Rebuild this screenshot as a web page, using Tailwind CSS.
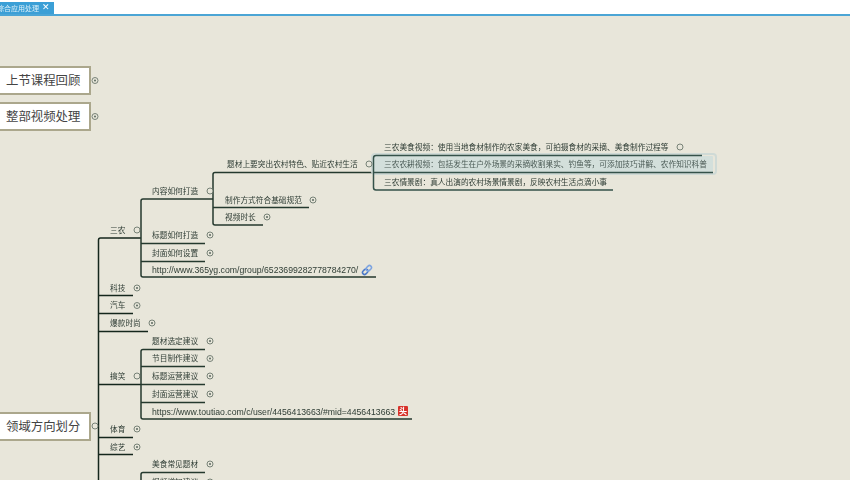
<!DOCTYPE html>
<html lang="zh-CN">
<head>
  <meta charset="UTF-8" />
  <title>综合应用处理</title>
  <script src="https://cdn.jsdelivr.net/npm/@tailwindcss/browser@4"></script>
</head>
<body class="w-[850px] h-[480px] overflow-hidden bg-[#e8e6da] font-['Noto_Sans_CJK_SC',sans-serif]">
  <!-- tab bar -->
  <header class="h-[16px] bg-white border-b-2 border-[#4ba5d5] flex items-end blur-[0.3px]">
    <div class="w-[54px] h-[12px] bg-[#3b9fd6] relative overflow-hidden">
      <span class="absolute left-[-3px] top-0 text-[7px] leading-[13px] whitespace-nowrap text-[#d8eef8]">综合应用处理</span>
      <span class="absolute left-[42px] top-0 text-[9px] leading-[11px] font-['DejaVu_Sans'] text-white">✕</span>
    </div>
  </header>

  <!-- mind map canvas -->
  <main class="absolute inset-0 top-[16px] blur-[0.45px]">
    <svg class="absolute left-0 top-[-16px]" width="850" height="480" fill="none" stroke="#24392e" stroke-width="1.500">
      <defs>
        <g id="plus">
          <circle r="3" stroke="#5c6a60" stroke-width="0.8" fill="#e8e6da" />
          <circle r="1" fill="#5c6a60" stroke="none" />
        </g>
        <g id="open">
          <circle r="3" stroke="#5c6a60" stroke-width="0.8" fill="#e8e6da" />
        </g>
      </defs>

      <!-- trunk -->
      <path stroke="#14261c" d="M98.500 480V240q0-2 2-2H141M98 295.500H133M98 313.500H133M98 331.500H148M98 384.500H141M98 437.500H133M98 454.500H133" />

      <!-- 三农 -->
      <path d="M213 199H143q-2 0-2 2V275q0 2 2 2H376M141 243.500H205M141 261.500H205" />
      <path d="M373 172.500H215q-2 0-2 2V223q0 2 2 2H263M213 207.500H309" />

      <!-- 搞笑 -->
      <path d="M205 349.500H143q-2 0-2 2V417q0 2 2 2H412M141 366.500H205M141 384.500H205M141 402.500H205" />

      <!-- 美食 -->
      <path d="M205 472.500H143q-2 0-2 2V480" />

      <!-- selected group -->
      <rect x="372" y="154" width="344" height="20" rx="3" fill="none" stroke="#cfdad6" stroke-width="2" />
      <rect x="374" y="156" width="339" height="16.500" rx="1" fill="#d3dfdb" stroke="none" />
      <path stroke="#35524a" d="M702 155.500H376q-2.500 0-2.500 2.500V187.500q0 2.500 2.500 2.500H613" />
      <path stroke="#35524a" d="M374 172.500H713" />

      <use href="#plus" x="95" y="80.500" />
      <use href="#plus" x="95" y="116.500" />
      <use href="#open" x="95" y="426" />
      <use href="#open" x="137" y="230" />
      <use href="#open" x="210" y="191" />
      <use href="#open" x="369" y="164" />
      <use href="#open" x="680" y="147" />
      <use href="#plus" x="313" y="200" />
      <use href="#plus" x="267" y="217" />
      <use href="#plus" x="210" y="235" />
      <use href="#plus" x="210" y="253" />
      <use href="#plus" x="137" y="288" />
      <use href="#plus" x="137" y="305.500" />
      <use href="#plus" x="152" y="323" />
      <use href="#plus" x="210" y="341" />
      <use href="#plus" x="210" y="358.500" />
      <use href="#plus" x="210" y="376" />
      <use href="#plus" x="210" y="394" />
      <use href="#open" x="137" y="376" />
      <use href="#plus" x="137" y="429" />
      <use href="#plus" x="137" y="447" />
      <use href="#plus" x="210" y="464" />
      <use href="#plus" x="210" y="482" />

      <!-- link icon -->
      <g transform="translate(367 270) rotate(-45)">
        <rect x="-5.500" y="-2" width="6" height="4" rx="2" stroke="#4a78c8" stroke-width="1.500" />
        <rect x="-0.500" y="-2" width="6" height="4" rx="2" stroke="#7da4e0" stroke-width="1.500" />
      </g>
    </svg>

    <!-- root topics -->
    <div class="absolute left-[-10px] top-[50px] w-[101px] h-[29px] bg-white border-2 border-[#aba78c] pl-[14px] text-[12.4px] leading-[25px] text-[#444]">上节课程回顾</div>
    <div class="absolute left-[-10px] top-[86px] w-[101px] h-[29px] bg-white border-2 border-[#aba78c] pl-[14px] text-[12.4px] leading-[25px] text-[#444]">整部视频处理</div>
    <div class="absolute left-[-10px] top-[396px] w-[101px] h-[29px] bg-white border-2 border-[#aba78c] pl-[14px] text-[12.4px] leading-[25px] text-[#444]">领域方向划分</div>

    <!-- first level -->
    <div class="text-[7.7px] leading-[12px] text-[#2f3d35] whitespace-nowrap">
      <span class="absolute left-[110px] top-[208px]">三农</span>
      <span class="absolute left-[110px] top-[266px]">科技</span>
      <span class="absolute left-[110px] top-[283px]">汽车</span>
      <span class="absolute left-[110px] top-[301px]">爆款时尚</span>
      <span class="absolute left-[110px] top-[354px]">搞笑</span>
      <span class="absolute left-[110px] top-[407px]">体育</span>
      <span class="absolute left-[110px] top-[425px]">综艺</span>

      <!-- second level -->
      <span class="absolute left-[152px] top-[169px]">内容如何打造</span>
      <span class="absolute left-[152px] top-[213px]">标题如何打造</span>
      <span class="absolute left-[152px] top-[231px]">封面如何设置</span>
      <span class="absolute left-[152px] top-[248px] font-['Liberation_Sans'] text-[8.7px]">http://www.365yg.com/group/6523699282778784270/</span>
      <span class="absolute left-[152px] top-[319px]">题材选定建议</span>
      <span class="absolute left-[152px] top-[336px]">节目制作建议</span>
      <span class="absolute left-[152px] top-[354px]">标题运营建议</span>
      <span class="absolute left-[152px] top-[372px]">封面运营建议</span>
      <span class="absolute left-[152px] top-[390px] font-['Liberation_Sans'] text-[8.7px]">https://www.toutiao.com/c/user/4456413663/#mid=4456413663</span>
      <span class="absolute left-[152px] top-[442px]">美食常见题材</span>
      <span class="absolute left-[152px] top-[460px]">视频增加建议</span>

      <!-- third level -->
      <span class="absolute left-[227px] top-[142px]">题材上要突出农村特色、贴近农村生活</span>
      <span class="absolute left-[225px] top-[178px]">制作方式符合基础规范</span>
      <span class="absolute left-[225px] top-[195px]">视频时长</span>

      <!-- fourth level -->
      <span class="absolute left-[384px] top-[125px]">三农美食视频：使用当地食材制作的农家美食，可拍摄食材的采摘、美食制作过程等</span>
      <span class="absolute left-[384px] top-[142px] text-[#4a5a55]">三农农耕视频：包括发生在户外场景的采摘收割果实、钓鱼等，可添加技巧讲解、农作知识科普</span>
      <span class="absolute left-[384px] top-[160px]">三农情景剧：真人出演的农村场景情景剧，反映农村生活点滴小事</span>
    </div>

    <!-- toutiao badge -->
    <span class="absolute left-[398px] top-[390px] w-[10px] h-[10px] rounded-[1px] bg-[#d8322a] text-white text-[8px] leading-[10px] text-center font-bold">头</span>
  </main>
</body>
</html>
